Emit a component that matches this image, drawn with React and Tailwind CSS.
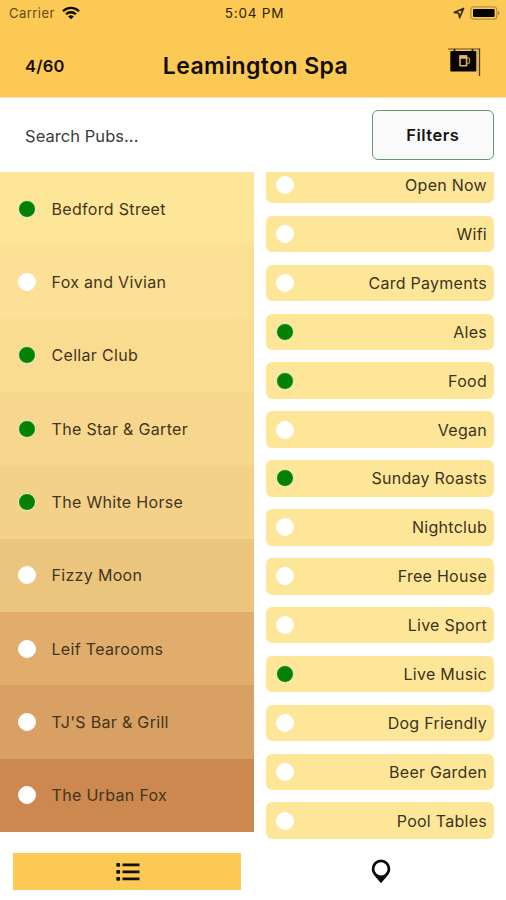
const pubs = [
  ["Bedford Street", true, "bg-[#fee699]"],
  ["Fox and Vivian", false, "bg-[#fce095]"],
  ["Cellar Club", true, "bg-[#fadc91]"],
  ["The Star & Garter", true, "bg-[#f7d78d]"],
  ["The White Horse", true, "bg-[#f3d188]"],
  ["Fizzy Moon", false, "bg-[#ebc57e]"],
  ["Leif Tearooms", false, "bg-[#e1ad6c]"],
  ["TJ'S Bar & Grill", false, "bg-[#d8a062]"],
  ["The Urban Fox", false, "bg-[#cc884f]"],
];

const filters = [
  ["Open Now", false],
  ["Wifi", false],
  ["Card Payments", false],
  ["Ales", true],
  ["Food", true],
  ["Vegan", false],
  ["Sunday Roasts", true],
  ["Nightclub", false],
  ["Free House", false],
  ["Live Sport", false],
  ["Live Music", true],
  ["Dog Friendly", false],
  ["Beer Garden", false],
  ["Pool Tables", false],
];

function Dot({ on }) {
  return (
    <span
      className={
        "block h-[18px] w-[18px] shrink-0 rounded-full border-[1.5px] " +
        (on ? "border-[#e6efd0] bg-[#058205]" : "border-white bg-white")
      }
    />
  );
}

function StatusBar() {
  return (
    <div className="grid h-[27px] grid-cols-3 items-center pl-[9px] pr-[6px] text-[13px] text-[#2b220c]">
      <div className="flex items-center gap-[7px]">
        <span className="tracking-[0.45px] text-[#5e4a1d]">Carrier</span>
        <svg className="-mt-[2px]" width="18" height="14" viewBox="0 0 18 14" fill="none" stroke="#0c0903" strokeWidth="2.3">
          <path d="M1 5.2a11.4 11.4 0 0 1 16 0" />
          <path d="M4 8.3a7.1 7.1 0 0 1 10 0" />
          <path d="M9 13.3 6.2 10.6a4 4 0 0 1 5.6 0Z" fill="#0c0903" stroke="none" />
        </svg>
      </div>
      <div className="text-center text-[13.5px] tracking-[0.8px]">5:04 PM</div>
      <div className="flex items-center justify-end gap-[5px] pb-px">
        <svg width="12" height="12" viewBox="0 0 12 12" fill="none" stroke="#352a10" strokeWidth="1.6" strokeLinejoin="round">
          <path d="M10.6 1.4 1.2 5.4l4.6.8.8 4.6Z" />
        </svg>
        <svg width="30" height="14" viewBox="0 0 30 14">
          <rect x="0.8" y="0.8" width="26" height="12.4" rx="3" fill="none" stroke="#b68f3c" strokeWidth="1.2" />
          <rect x="3" y="3" width="21.6" height="8" rx="1" fill="#050300" />
          <path d="M28 4.7v4.6q1.4-.8 1.4-2.3T28 4.7Z" fill="#ad8738" />
        </svg>
      </div>
    </div>
  );
}

function PubSign() {
  return (
    <svg width="34" height="30" viewBox="0 0 34 30" fill="none">
      <path d="M1 2h31.5" stroke="#7c602a" strokeWidth="1.2" />
      <path d="M32.5 1.5V29" stroke="#4d3a13" strokeWidth="1.3" />
      <path d="M30.5 3v24" stroke="#d8ab4a" strokeWidth="0.8" />
      <path d="M7.5 2v3M25.5 2v3" stroke="#211806" strokeWidth="1.7" />
      <rect x="3.3" y="4" width="26" height="20.5" rx="0.8" fill="#070501" />
      <path d="M13 9v9.800h6.600V9Z" stroke="#d8ae62" strokeWidth="1.6" strokeLinejoin="round" />
      <path d="M12.500 8.200h7.500v3.600h-7.500z" fill="#dfb66b" />
      <path d="M20 10.800h1q1.500 0 1.500 1.500v2.800q0 1.500-1.500 1.500h-1" stroke="#bd944c" strokeWidth="1.3" />
    </svg>
  );
}

export default function App() {
  return (
    <div className="flex h-[900px] w-[506px] flex-col overflow-hidden bg-white font-[Inter,'Liberation_Sans',sans-serif]">
      <header className="h-[98px] shrink-0 border-b border-[#fbdfaf] bg-[#fcc954]">
        <StatusBar />
        <div className="grid h-[70px] grid-cols-[1fr_auto_1fr] items-center pt-[7px]">
          <span className="pl-[25px] pt-px text-[16.5px] font-semibold leading-6 tracking-[0.25px] text-[#161004]">4/60</span>
          <h1 className="pl-[5px] text-[23px] font-semibold leading-8 tracking-[0.4px] text-[#120d03]">Leamington Spa</h1>
          <div className="flex justify-end pb-2 pr-[25px]">
            <PubSign />
          </div>
        </div>
      </header>

      <div className="flex h-[74px] shrink-0 items-center justify-between pl-[25px] pr-3">
        <span className="pt-[2px] text-[16.5px] tracking-[0.05px] text-[#3b3b3b]">Search Pubs...</span>
        <button className="h-[50px] w-[122.5px] rounded-[6px] border border-[#5f9a70] bg-[#fafafa] pt-px text-[16.5px] font-semibold tracking-[0.5px] text-[#151515]">
          Filters
        </button>
      </div>

      <main className="flex h-[668px] shrink-0">
        <ul className="flex h-[660px] w-[253.5px] flex-col">
          {pubs.map(([name, on, shade]) => (
            <li key={name} className={"flex flex-1 items-center gap-[15.5px] pl-[18px] " + shade}>
              <Dot on={on} />
              <span className="text-[16px] leading-6 tracking-[0.32px] text-[#43351d]">{name}</span>
            </li>
          ))}
        </ul>
        <ul className="flex h-[667px] flex-1 flex-col justify-end gap-[12.3px] overflow-hidden pl-[12.5px] pr-3">
          {filters.map(([name, on]) => (
            <li
              key={name}
              className="flex h-[36.6px] shrink-0 items-center justify-between rounded-[6px] bg-[#fee699] pl-[9.5px] pr-[7px]"
            >
              <Dot on={on} />
              <span className="text-[16px] leading-6 tracking-[0.27px] text-[#3c331d]">{name}</span>
            </li>
          ))}
        </ul>
      </main>

      <nav className="grid h-[60px] grid-cols-2 pt-[13px]">
        <div className="ml-[12.5px] mr-3 flex h-[37px] items-center justify-center bg-[#fcc954]">
          <svg className="ml-[2px]" width="24" height="20" viewBox="0 0 24 20" fill="#161105">
            <rect x="0.300" y="1" width="3.800" height="3.800" rx="1" />
            <rect x="0.300" y="8" width="3.800" height="3.800" rx="1" />
            <rect x="0.300" y="15" width="3.800" height="3.800" rx="1" />
            <path d="M6.500 1.500h17v2.800h-17zM6.500 8.500h17v2.800h-17zM6.500 15.500h17v2.800h-17z" />
          </svg>
        </div>
        <div className="flex h-[37px] items-center justify-center pl-[2px]">
          <svg width="20" height="25" viewBox="0 0 20 25">
            <path fillRule="evenodd" fill="#0b0b0b" d="M10 .5a9.300 9.300 0 0 0-9.300 9.300c0 3 1.500 5.500 3.500 7.700L10 24.300l5.800-6.800c2-2.200 3.500-4.700 3.500-7.700A9.300 9.300 0 0 0 10 .5Zm0 2.700a6.600 6.600 0 1 1 0 13.200 6.600 6.600 0 0 1 0-13.200Z" />
          </svg>
        </div>
      </nav>
    </div>
  );
}
